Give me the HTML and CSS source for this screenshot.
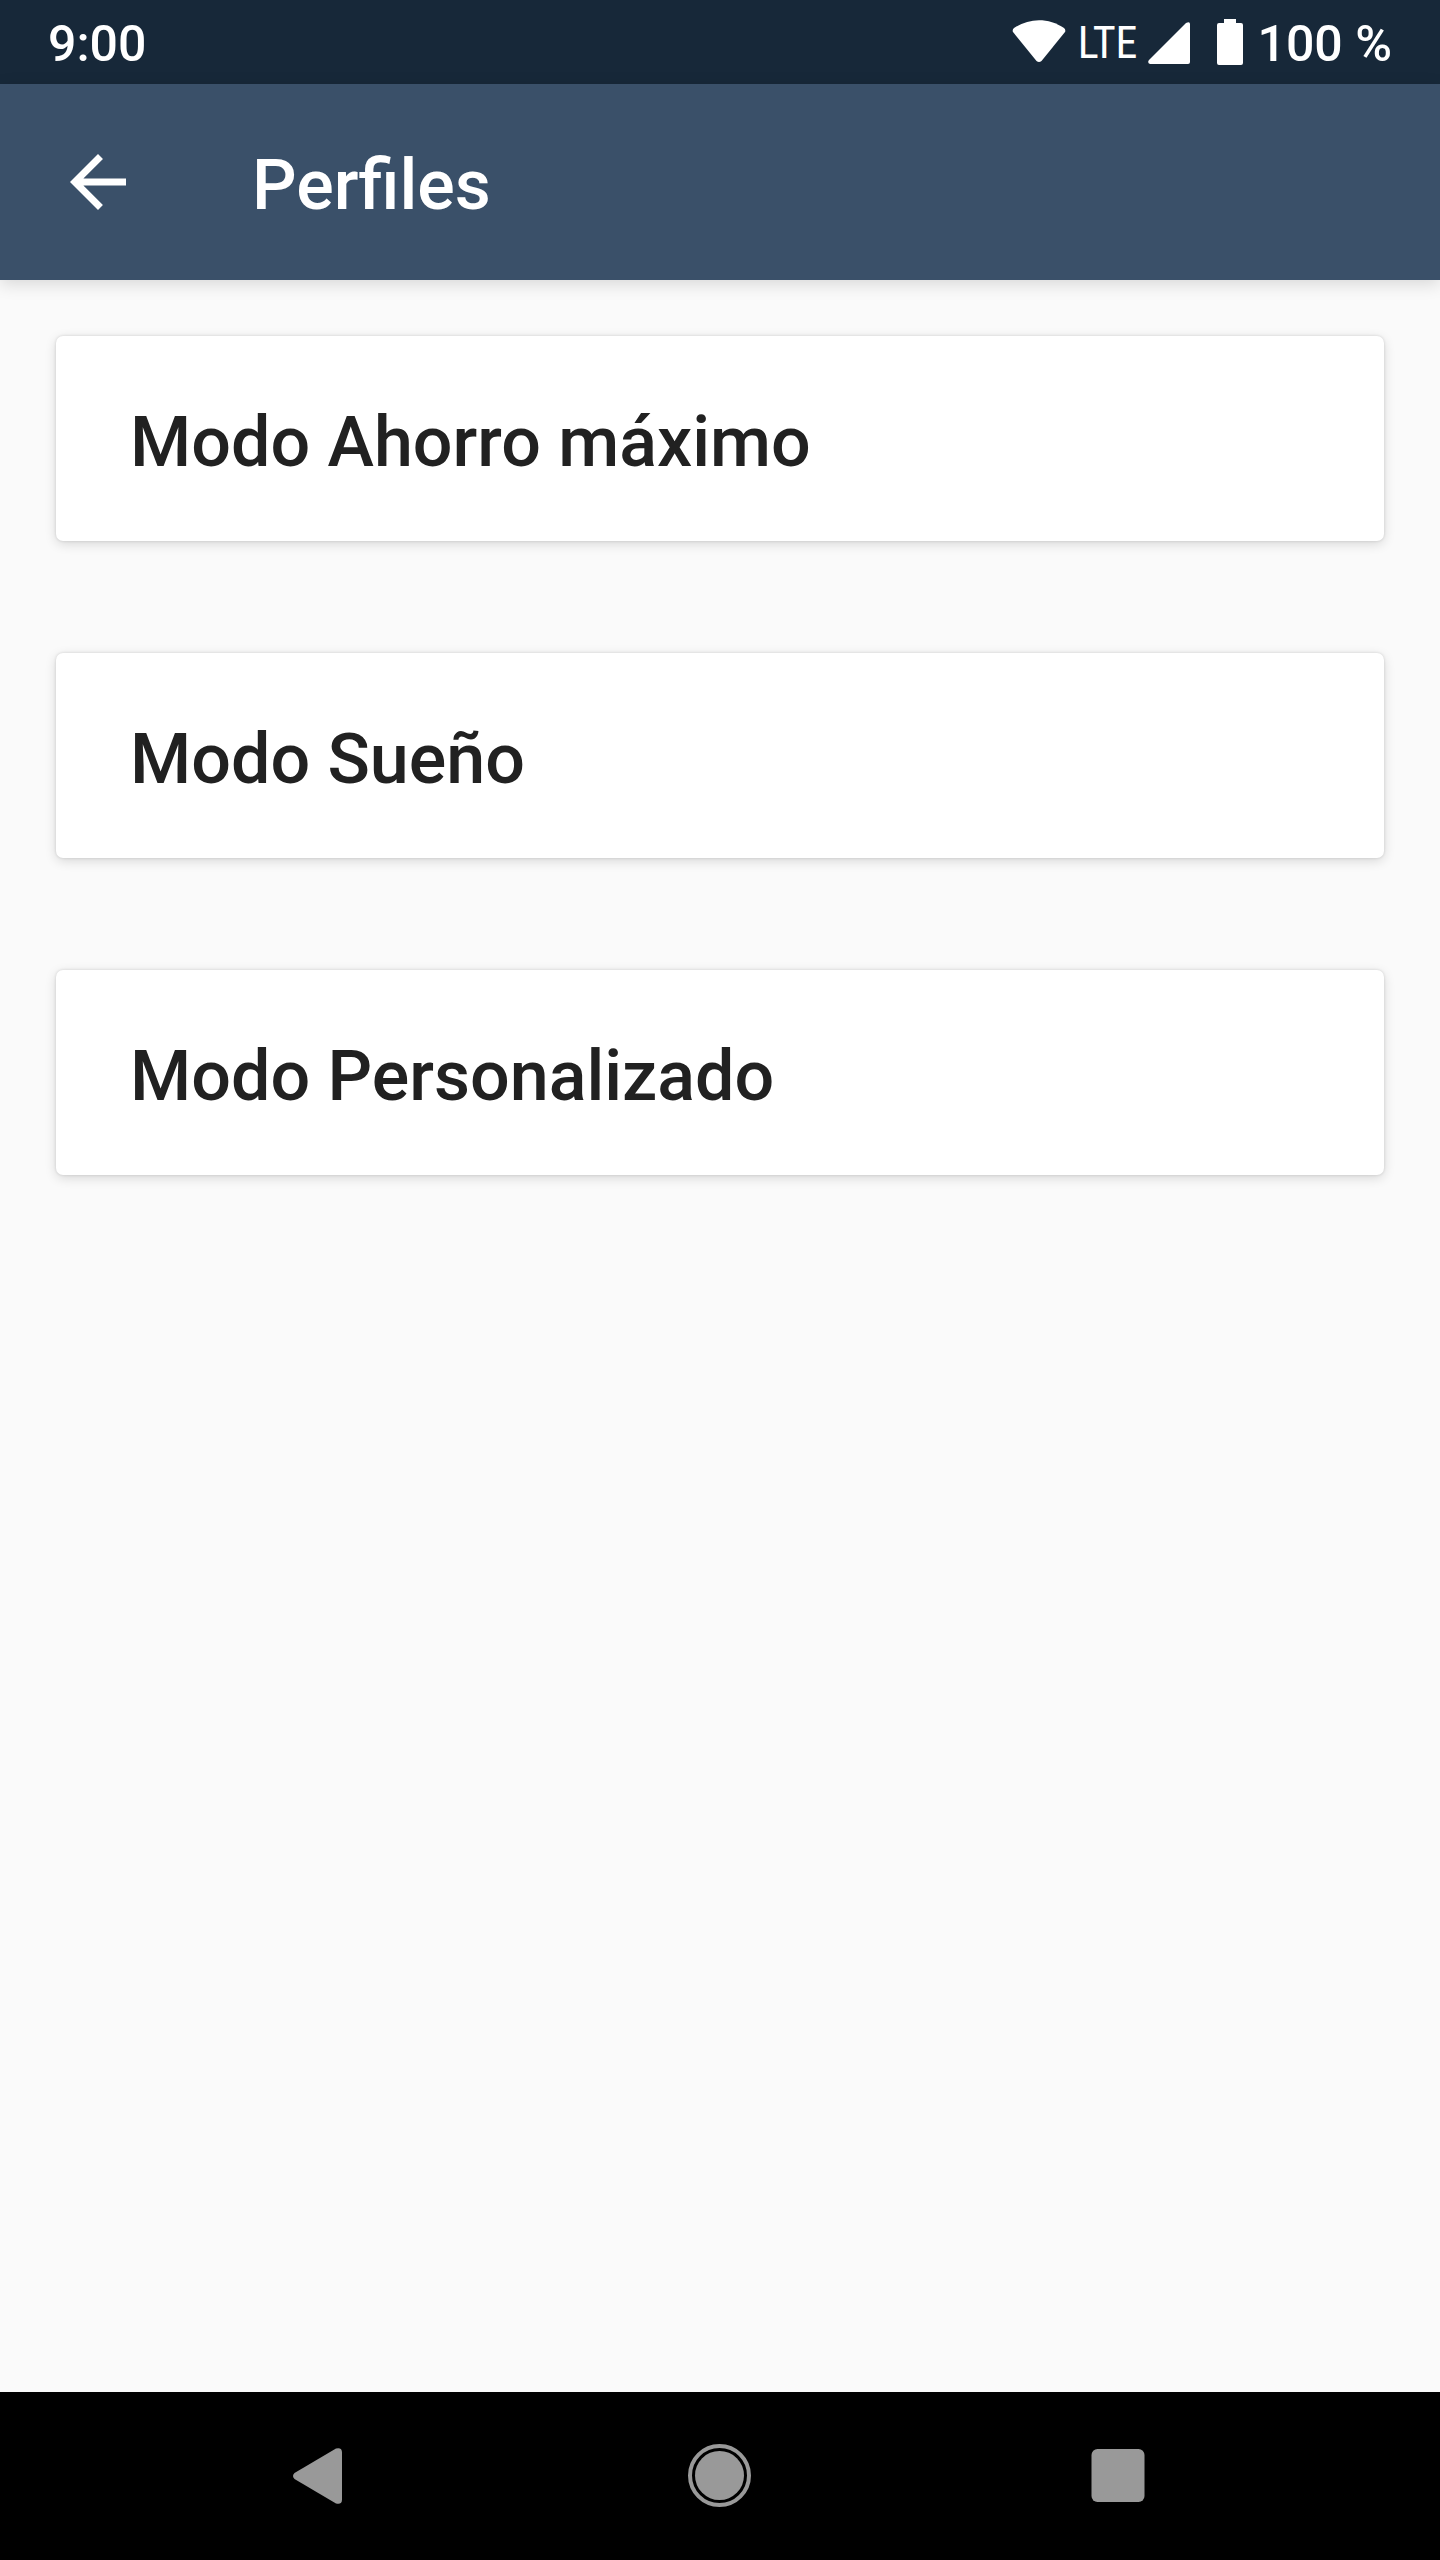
FILE: index.html
```html
<!DOCTYPE html>
<html lang="es">
<head>
<meta charset="utf-8">
<meta name="viewport" content="width=device-width, initial-scale=1">
<title>Perfiles</title>
<link rel="stylesheet" href="styles.css">
</head>
<body>
<div class="status-bar">
  <time class="clock">9:00</time>
  <div class="status-icons">
    <svg class="wifi" viewBox="0 0 54 48" aria-hidden="true"><path d="M24.500 42Q27 44 29.500 42L53 13Q54 11 52 9C37-1.500 17-1.500 2 9Q0 11 1 13Z"/></svg>
    <span class="network">LTE</span>
    <svg class="signal" viewBox="0 0 42 48" aria-hidden="true"><path d="M2 45Q-1 44 1 41L38 4q4-2 4 1v38q0 2-2 2Z"/></svg>
    <svg class="battery" viewBox="0 0 26 48" aria-hidden="true"><path d="M7 0h12v4h5q2 0 2 2v38q0 2-2 2H2q-2 0-2-2V6q0-2 2-2h5Z"/></svg>
    <span class="charge">100 %</span>
  </div>
</div>
<header class="app-bar">
  <button class="back" type="button" aria-label="Atrás"><svg viewBox="0 0 24 24" aria-hidden="true"><path d="M20 11H7.830l5.590-5.590L12 4l-8 8 8 8 1.410-1.410L7.830 13H20v-2z"/></svg></button>
  <h1 class="title">Perfiles</h1>
</header>
<main class="profiles">
  <button class="card" type="button">Modo Ahorro máximo</button>
  <button class="card" type="button">Modo Sueño</button>
  <button class="card" type="button">Modo Personalizado</button>
</main>
<nav class="nav-bar">
  <button class="nav-button" type="button" aria-label="Volver"><svg viewBox="0 0 64 64" aria-hidden="true"><path d="M5.500 29Q2.500 32 5.500 35L47 59.500q6 1.500 6-4v-47q0-5.500-6-4Z"/></svg></button>
  <button class="nav-button" type="button" aria-label="Inicio"><svg viewBox="0 0 64 64" aria-hidden="true"><circle cx="31.500" cy="31.500" r="24.500"/><circle class="ring" cx="31.500" cy="31.500" r="29.500"/></svg></button>
  <button class="nav-button" type="button" aria-label="Recientes"><svg viewBox="0 0 64 64" aria-hidden="true"><rect x="4.500" y="5" width="53" height="53" rx="6"/></svg></button>
</nav>
</body>
</html>
```
FILE: styles.css
```css
* { box-sizing: border-box; }
body { margin: 0; min-height: 100vh; display: flex; flex-direction: column; background: #fafafa; font-family: Roboto, sans-serif; font-weight: 500; }
button { margin: 0; padding: 0; border: 0; background: none; font: inherit; cursor: pointer; }
svg { display: block; flex: none; fill: currentColor; }
.status-bar { display: flex; justify-content: space-between; align-items: center; height: 84px; padding: 2px 48px 0; background: #172839; color: #fff; font-size: 50px; line-height: 60px; }
.status-icons { display: flex; align-items: center; }
.clock, .charge { padding-top: 2px; }
.wifi { width: 54px; height: 48px; margin-right: 12px; }
.network { margin-right: 10px; font-family: "Roboto Condensed", "Liberation Sans Narrow", Roboto, sans-serif; font-size: 44px; font-weight: 400; }
.signal { width: 42px; height: 48px; margin-right: 27px; }
.battery { width: 26px; height: 48px; margin-right: 15px; }
.app-bar { display: flex; align-items: center; height: 196px; padding: 0 56px; background: #3a5069; color: #fff; box-shadow: 0 4px 16px rgba(0,0,0,.14); }
.back { margin-right: 112px; color: inherit; }
.back svg { width: 84px; height: 84px; }
.title { margin: 0; padding-top: 6px; font-size: 70px; font-weight: 500; line-height: 84px; }
.profiles { flex: 1; display: flex; flex-direction: column; gap: 112px; padding: 56px; }
.card { padding: 64px 74px 57px; border-radius: 7px; background: #fff; color: #212121; font-size: 70px; line-height: 84px; text-align: left; box-shadow: 0 3px 12px rgba(0,0,0,.14), 0 0 3px rgba(0,0,0,.14); }
.nav-bar { display: flex; justify-content: center; align-items: center; height: 168px; gap: 335px; background: #000; color: #999; }
.nav-button { color: inherit; }
.nav-button svg { width: 64px; height: 64px; }
.ring { fill: none; stroke: currentColor; stroke-width: 4px; }
```
